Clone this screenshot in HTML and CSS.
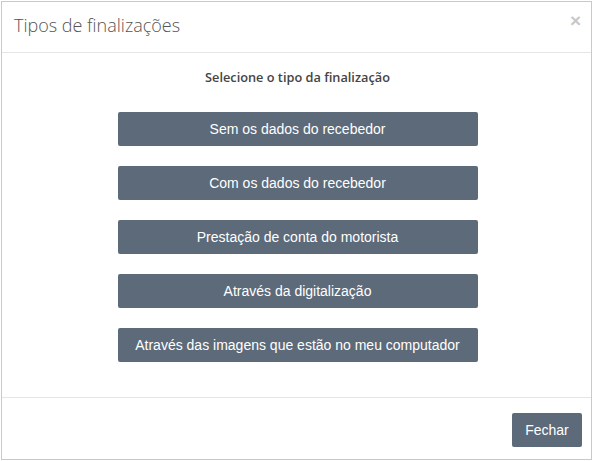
FILE: index.html
```html
<!DOCTYPE html>
<html lang="pt">
<head>
<meta charset="utf-8">
<link rel="stylesheet" href="styles.css">
</head>
<body>
<div class="modal">
  <div class="modal-header">
    <h4 class="modal-title">Tipos de finalizações</h4>
    <span class="close">&times;</span>
  </div>
  <div class="modal-body">
    <p class="label">Selecione o tipo da finalização</p>
    <div class="options">
      <button class="btn">Sem os dados do recebedor</button>
      <button class="btn">Com os dados do recebedor</button>
      <button class="btn">Prestação de conta do motorista</button>
      <button class="btn">Através da digitalização</button>
      <button class="btn">Através das imagens que estão no meu computador</button>
    </div>
  </div>
  <div class="modal-footer">
    <button class="btn btn-close">Fechar</button>
  </div>
</div>
</body>
</html>
```

FILE: styles.css
```css
html, body {
  margin: 0;
  padding: 0;
  background: #fff;
}
body {
  padding: 1px;
}
.modal {
  box-sizing: border-box;
  width: 591px;
  height: 459px;
  border: 1px solid #c9c9c9;
  background: #fff;
  display: flex;
  flex-direction: column;
}
.modal-header {
  height: 50px;
  border-bottom: 1px solid #e5e5e5;
  display: flex;
  align-items: center;
  justify-content: space-between;
  padding: 0 10px 0 12px;
}
.modal-title {
  margin: 0;
  font-family: "Open Sans", sans-serif;
  font-weight: 300;
  font-size: 18px;
  color: #555;
  position: relative;
  top: -2px;
}
.close {
  font-family: "Liberation Sans", Arial, sans-serif;
  font-weight: bold;
  font-size: 19px;
  color: #c8c8c8;
  position: relative;
  top: -6px;
}
.modal-body {
  flex: 1;
  padding: 15px 0 0 2px;
  display: flex;
  flex-direction: column;
  align-items: center;
}
.label {
  margin: 0 0 26px;
  font-family: "Open Sans", sans-serif;
  font-weight: 600;
  font-size: 12.75px;
  line-height: 18px;
  color: #444;
}
.options {
  display: flex;
  flex-direction: column;
  gap: 20px;
}
.btn {
  box-sizing: border-box;
  border: none;
  border-radius: 2px;
  background: #5c6a7a;
  color: #fff;
  font-family: "Liberation Sans", Arial, sans-serif;
  font-size: 14px;
  cursor: pointer;
}
.options .btn {
  width: 360px;
  height: 34px;
}
.modal-footer {
  height: 62px;
  border-top: 1px solid #e5e5e5;
  display: flex;
  justify-content: flex-end;
  align-items: flex-start;
  padding: 15px 9px 0 0;
  box-sizing: border-box;
}
.btn-close {
  width: 70px;
  height: 34px;
}
```
